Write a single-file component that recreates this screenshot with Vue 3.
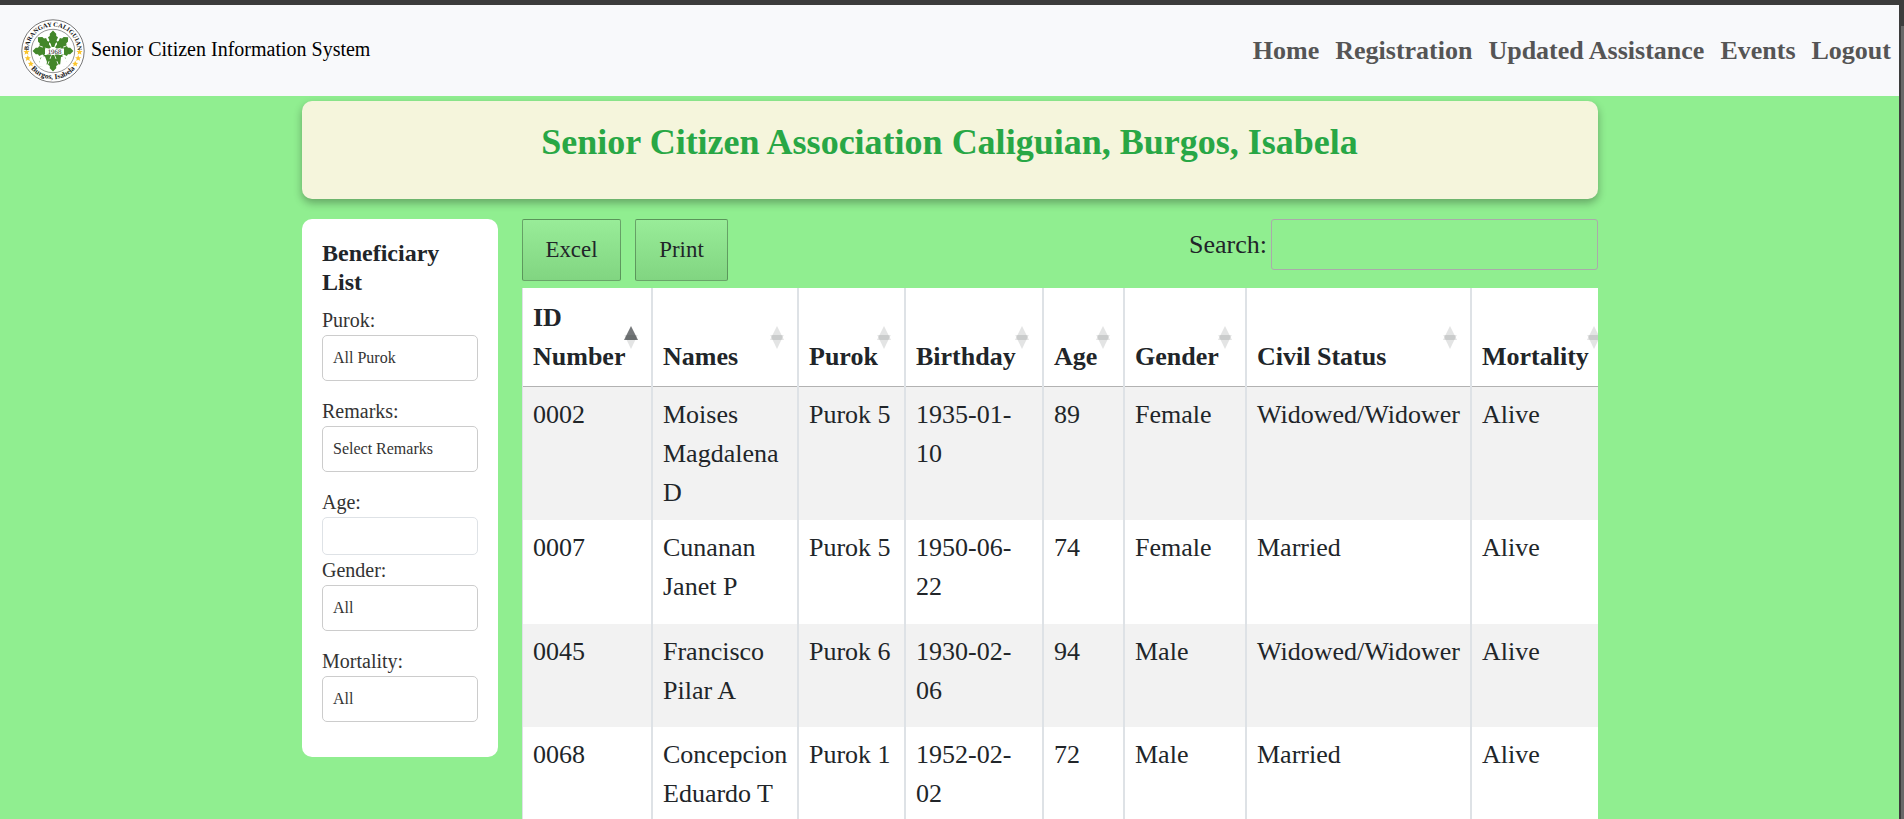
<script setup>
const links = ['Home', 'Registration', 'Updated Assistance', 'Events', 'Logout']

const filters = [
  { label: 'Purok:', value: 'All Purok' },
  { label: 'Remarks:', value: 'Select Remarks' },
  { label: 'Age:', input: true },
  { label: 'Gender:', value: 'All' },
  { label: 'Mortality:', value: 'All' },
]

const columns = [
  { title: 'ID Number', key: 'id', cls: 'c-id', sorted: true },
  { title: 'Names', key: 'name', cls: 'c-name' },
  { title: 'Purok', key: 'purok', cls: 'c-purok' },
  { title: 'Birthday', key: 'birthday', cls: 'c-birthday' },
  { title: 'Age', key: 'age', cls: 'c-age' },
  { title: 'Gender', key: 'gender', cls: 'c-gender' },
  { title: 'Civil Status', key: 'status', cls: 'c-status' },
  { title: 'Mortality', key: 'mortality', cls: 'c-mortality' },
]

const rows = [
  { id: '0002', name: 'Moises Magdalena D', purok: 'Purok 5', birthday: '1935-01-10', age: 89, gender: 'Female', status: 'Widowed/Widower', mortality: 'Alive' },
  { id: '0007', name: 'Cunanan Janet P', purok: 'Purok 5', birthday: '1950-06-22', age: 74, gender: 'Female', status: 'Married', mortality: 'Alive' },
  { id: '0045', name: 'Francisco Pilar A', purok: 'Purok 6', birthday: '1930-02-06', age: 94, gender: 'Male', status: 'Widowed/Widower', mortality: 'Alive' },
  { id: '0068', name: 'Concepcion Eduardo T', purok: 'Purok 1', birthday: '1952-02-02', age: 72, gender: 'Male', status: 'Married', mortality: 'Alive' },
]

const leaves = [0, 48, 90, 138, 180, 222, 270, 312]
const stars = [
  [5.5, 33], [6.8, 39.2], [9.8, 44.8],
  [58.5, 33], [57.2, 39.2], [54.2, 44.8],
]
</script>

<template>
  <div class="window">
    <div class="page">
      <header class="navbar">
        <a class="brand">
          <svg class="logo" viewBox="0 0 64 64">
            <defs>
              <path id="arc-top" d="M7.6 32 A24.4 24.4 0 0 1 56.4 32" />
              <path id="arc-bottom" d="M4.2 38 A28.5 28.5 0 0 0 59.8 38" />
              <path id="star" d="M0 -3.2 L.9 -1 L3.1 -.9 L1.4 .5 L2 2.7 L0 1.5 L-2 2.7 L-1.4 .5 L-3.1 -.9 L-.9 -1 Z" />
              <path id="leaf" d="M-1.3 -4 L-2.4 -7.6 L-4.2 -9 L-3.6 -10.8 L-5 -13.8 L-3.2 -15 L-3.2 -17.2 L0 -20.4 L3.2 -17.2 L3.2 -15 L5 -13.8 L3.6 -10.8 L4.2 -9 L2.4 -7.6 L1.3 -4 Z" />
            </defs>
            <circle cx="32" cy="32" r="31.2" class="ring-outer" />
            <circle cx="32" cy="32" r="21.7" class="ring-inner" />
            <use
              v-for="a in leaves"
              :key="a"
              href="#leaf"
              class="leaf"
              :transform="`translate(32 32) rotate(${a})`"
            />
            <rect x="24" y="29.5" width="19" height="6" class="year-bg" />
            <path class="figure" d="M17 47 L19 41 L21 37 L24 37.5 L26 43 L25 48 Z M39 47 L40 38 L43 37 L45.5 41 L47 47 L45 48 Z" />
            <text x="33.5" y="35" class="year">1968</text>
            <use
              v-for="(s, i) in stars"
              :key="i"
              href="#star"
              class="star"
              :transform="`translate(${s[0]} ${s[1]})`"
            />
            <text class="seal-top"><textPath href="#arc-top" startOffset="50%">BARANGAY CALIGUIAN</textPath></text>
            <text class="seal-bottom"><textPath href="#arc-bottom" startOffset="50%">Burgos, Isabela</textPath></text>
          </svg>
          <span class="brand-name">Senior Citizen Information System</span>
        </a>
        <nav class="links">
          <a v-for="l in links" :key="l">{{ l }}</a>
        </nav>
      </header>

      <div class="container">
        <section class="banner">
          <h1>Senior Citizen Association Caliguian, Burgos, Isabela</h1>
        </section>

        <div class="content">
          <aside class="sidebar">
            <h2>Beneficiary List</h2>
            <div v-for="f in filters" :key="f.label" class="field" :class="{ tight: f.input }">
              <label>{{ f.label }}</label>
              <div v-if="f.input" class="input"></div>
              <div v-else class="select">{{ f.value }}</div>
            </div>
          </aside>

          <main class="main">
            <div class="toolbar">
              <div class="buttons">
                <button class="btn excel">Excel</button>
                <button class="btn print">Print</button>
              </div>
              <label class="search"><span>Search:</span><input type="search" /></label>
            </div>
            <table>
              <thead>
                <tr>
                  <th v-for="c in columns" :key="c.key" :class="[c.cls, { sorted: c.sorted }]">
                    {{ c.title }}
                    <svg class="sort" viewBox="0 0 14 23">
                      <path class="up" d="M7 0 L14 14 H0 Z" />
                      <path class="down" d="M0.3 9 H13.7 L7 23 Z" />
                    </svg>
                  </th>
                </tr>
              </thead>
              <tbody>
                <tr v-for="r in rows" :key="r.id">
                  <td v-for="c in columns" :key="c.key">{{ r[c.key] }}</td>
                </tr>
              </tbody>
            </table>
          </main>
        </div>
      </div>
    </div>
    <div class="scrollbar"><div class="thumb"></div></div>
  </div>
</template>

<style>
body {
  margin: 0;
  overflow: hidden;
}
</style>

<style scoped>
* {
  box-sizing: border-box;
}

.window {
  display: flex;
  width: 1904px;
  height: 819px;
  padding-top: 5px;
  overflow: hidden;
  background: #3c3c3c;
  color: #212529;
  font-family: "Liberation Serif", "Times New Roman", serif;
  font-size: 26px;
  line-height: 39px;
}

.page {
  width: 1899px;
  height: 814px;
  overflow: hidden;
  background: #90ee90;
}

.scrollbar {
  flex: 1;
  padding: 21px 0 0 2px;
}

.thumb {
  height: 793px;
  background: #686868;
}

.navbar {
  display: flex;
  align-items: center;
  justify-content: space-between;
  height: 91px;
  padding: 0 8px 0 21px;
  background: #f8f9fb;
}

.brand {
  display: flex;
  align-items: center;
  color: #000;
}

.logo {
  width: 64px;
  height: 64px;
  margin-right: 6px;
  text-rendering: geometricPrecision;
}

.ring-outer {
  fill: #fff;
  stroke: #555;
  stroke-width: 0.8;
}

.ring-inner {
  fill: #fff;
  stroke: #666;
  stroke-width: 0.7;
}

.leaf {
  fill: #43872a;
}

.year-bg,
.figure {
  fill: #fff;
}

.year {
  font-size: 6.8px;
  text-anchor: middle;
  fill: #111;
}

.star {
  fill: #fbc52c;
}

.seal-top {
  font-size: 6.5px;
  font-weight: bold;
  letter-spacing: -0.08px;
  text-anchor: middle;
  fill: #111;
}

.seal-bottom {
  font-size: 7.6px;
  font-weight: bold;
  text-anchor: middle;
  fill: #222;
}

.brand-name {
  margin-top: -4px;
  font-size: 20px;
  line-height: 30px;
}

.links {
  display: flex;
  gap: 16px;
  color: #555;
  font-weight: bold;
}

.container {
  width: 1296px;
  margin: 5px 0 0 302px;
}

.banner {
  height: 98px;
  padding: 20px 1px 0 0;
  border-radius: 10px;
  background: #f5f5dc;
  box-shadow: 0 4px 8px rgba(0, 0, 0, 0.3);
  text-align: center;
}

h1 {
  margin: 0;
  color: #28a745;
  font-size: 36px;
  line-height: 43px;
}

.content {
  display: flex;
  align-items: flex-start;
  gap: 24px;
  margin-top: 20px;
}

.sidebar {
  width: 196px;
  height: 538px;
  padding: 20px;
  border-radius: 10px;
  background: #fff;
}

h2 {
  margin: 0 0 8px;
  font-size: 24px;
  line-height: 29px;
}

.field {
  margin-bottom: 15px;
  color: #333;
}

.field.tight {
  margin-bottom: 0;
}

.field label {
  display: block;
  font-size: 20px;
  line-height: 30px;
}

.select,
.input {
  height: 46px;
  border: 1px solid #ccc;
  border-radius: 5px;
}

.select {
  padding-left: 10px;
  font-size: 16px;
  line-height: 44px;
}

.input {
  height: 38px;
  border-color: #dee2e6;
}

.main {
  width: 1076px;
  overflow: hidden;
}

.toolbar {
  display: flex;
  align-items: flex-start;
  justify-content: space-between;
  height: 69px;
}

.buttons {
  display: flex;
  gap: 14px;
}

.btn {
  height: 62px;
  padding: 0;
  border: 1px solid rgba(0, 0, 0, 0.3);
  border-radius: 2px;
  background: linear-gradient(to bottom, rgba(230, 230, 230, 0.1) 0%, rgba(0, 0, 0, 0.1) 100%);
  color: inherit;
  font-family: inherit;
  font-size: 22.88px;
}

.excel {
  width: 99px;
}

.print {
  width: 93px;
}

.search {
  display: flex;
  align-items: flex-start;
  gap: 4px;
}

.search span {
  padding-top: 6px;
}

.search input {
  width: 327px;
  height: 51px;
  border: 1px solid #aaa;
  border-radius: 3px;
  background: transparent;
}

table {
  width: 1093px;
  table-layout: fixed;
  border-collapse: separate;
  border-spacing: 0;
  background: #fff;
}

th {
  position: relative;
  height: 99px;
  padding: 10px 9px 11px 10px;
  border: 0 solid #dee2e6;
  border-width: 0 1px;
  box-shadow: inset 0 -1px #b2b2b2;
  text-align: left;
  vertical-align: bottom;
}

td {
  height: 104px;
  padding: 8px 9px 8px 10px;
  border: 0 solid #dee2e6;
  border-width: 0 1px;
  vertical-align: top;
}

tbody tr:nth-child(odd) {
  background: #f2f2f2;
}

tbody tr:nth-child(3) td {
  height: 103px;
}

.c-id { width: 130px; }
.c-name { width: 146px; }
.c-purok { width: 107px; }
.c-birthday { width: 138px; }
.c-age { width: 81px; }
.c-gender { width: 122px; }
.c-status { width: 225px; }
.c-mortality { width: 144px; }

/* Sort arrows float over the header cell's right edge */
.sort {
  position: absolute;
  top: 38px;
  right: 13px;
  width: 14px;
  height: 23px;
  fill: #212529;
}

.sort path {
  opacity: 0.125;
}

.sorted .up {
  opacity: 0.62;
}
</style>
